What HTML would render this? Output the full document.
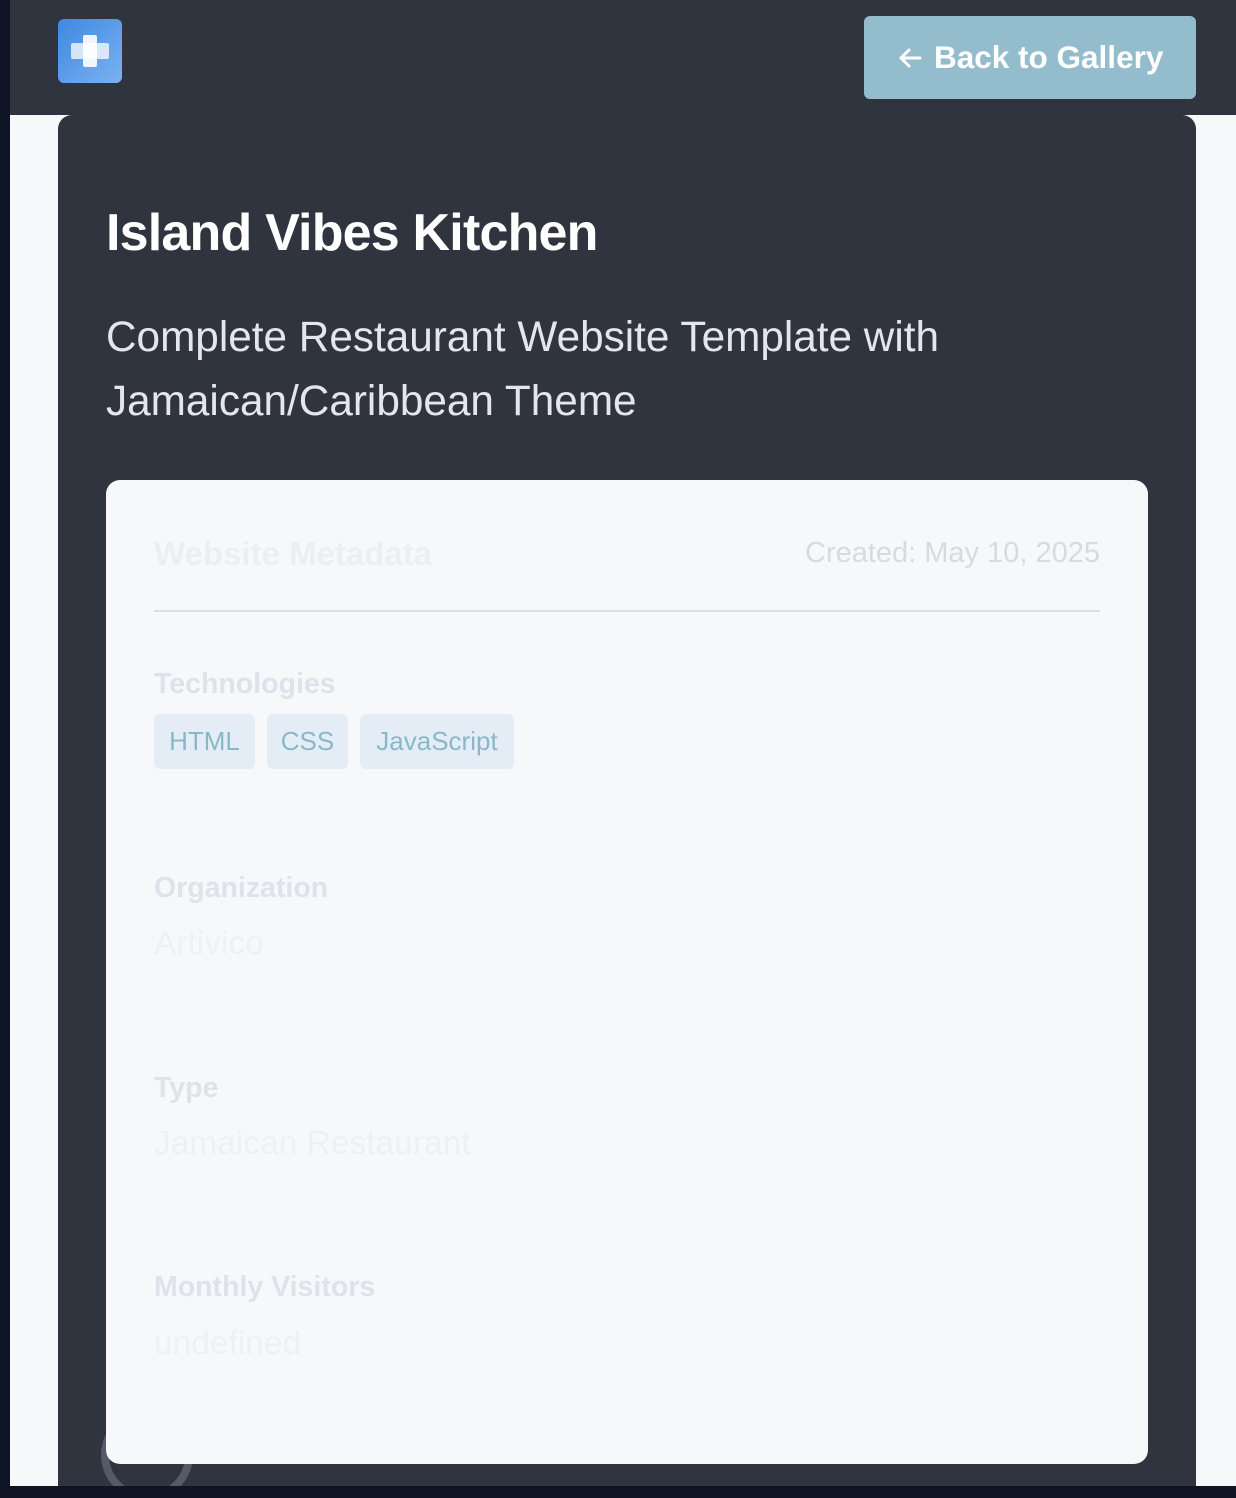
<!DOCTYPE html>
<html><head><meta charset="utf-8"><style>
*{margin:0;padding:0;box-sizing:border-box}
html,body{width:1236px;height:1498px;overflow:hidden;background:#0f1424;font-family:"Liberation Sans",sans-serif}
.page{position:absolute;left:10px;top:0;width:1226px;height:1486px;background:#f7f8fa}
.hdr{position:absolute;left:10px;top:0;width:1226px;height:115px;background:#30343f}
.logo{position:absolute;left:58px;top:19px;width:64px;height:64px;border-radius:6px;background:linear-gradient(135deg,#3f88e0,#7ab2f3)}
.logo .h{position:absolute;left:13px;top:24px;width:38px;height:16px;background:rgba(255,255,255,.75);border-radius:2px}
.logo .v{position:absolute;left:25px;top:16px;width:14px;height:32px;background:rgba(255,255,255,.9);border-radius:2px}
.btn{position:absolute;left:864px;top:16px;width:332px;height:83px;border-radius:6px;background:#93bdcc;color:#fff;font-weight:bold;font-size:31.5px;line-height:83px}
.btn svg{position:absolute;left:34px;top:30px}
.btn span{position:absolute;left:70px;top:0}
.card{position:absolute;left:58px;top:115px;width:1138px;height:1371px;background:#30343f;border-radius:14px 14px 0 0;overflow:hidden}
.ring{position:absolute;left:43px;top:1294px;width:92px;height:92px;border-radius:50%;border:8px solid #555a66}
h1{position:absolute;left:106px;top:203px;font-size:52px;font-weight:bold;color:#fff;letter-spacing:-0.8px}
.sub{position:absolute;left:106px;top:305px;font-size:42.3px;line-height:64px;color:#e3e6ee;width:900px}
.inner{position:absolute;left:106px;top:480px;width:1042px;height:984px;background:#f7f8fa;border-radius:14px}
.mt{position:absolute;left:154px;top:535px;font-size:33px;font-weight:bold;color:#eceef2}
.cr{position:absolute;right:136px;top:537px;font-size:29px;color:#d6dae2}
.hr{position:absolute;left:154px;top:610px;width:946px;height:2px;background:#dcdee3}
.lbl{position:absolute;left:154px;font-size:28.5px;font-weight:bold;color:#dfe2ea}
.val{position:absolute;left:154px;font-size:33.5px;color:#eef0f4}
.tag{position:absolute;top:714px;height:55px;border-radius:6px;background:#e4edf6;color:#8ab8c9;font-size:26px;line-height:55px;text-align:center}
</style></head><body>
<div class="page"></div>
<div class="hdr"></div>
<div class="logo"><div class="h"></div><div class="v"></div></div>
<div class="btn"><svg width="24" height="24" viewBox="0 0 24 24" fill="none" stroke="#fff" stroke-width="3" stroke-linecap="round" stroke-linejoin="round"><path d="M22 12H3M11 4l-8 8 8 8"/></svg><span>Back to Gallery</span></div>
<div class="card"><div class="ring"></div></div>
<h1>Island Vibes Kitchen</h1>
<div class="sub">Complete Restaurant Website Template with Jamaican/Caribbean Theme</div>
<div class="inner"></div>
<div class="mt">Website Metadata</div>
<div class="cr">Created: May 10, 2025</div>
<div class="hr"></div>
<div class="lbl" style="top:668px">Technologies</div>
<div class="tag" style="left:154px;width:101px">HTML</div>
<div class="tag" style="left:267px;width:81px">CSS</div>
<div class="tag" style="left:360px;width:154px">JavaScript</div>
<div class="lbl" style="top:872px">Organization</div>
<div class="val" style="top:925px">Artivico</div>
<div class="lbl" style="top:1072px">Type</div>
<div class="val" style="top:1125px">Jamaican Restaurant</div>
<div class="lbl" style="top:1271px">Monthly Visitors</div>
<div class="val" style="top:1325px">undefined</div>
</body></html>
